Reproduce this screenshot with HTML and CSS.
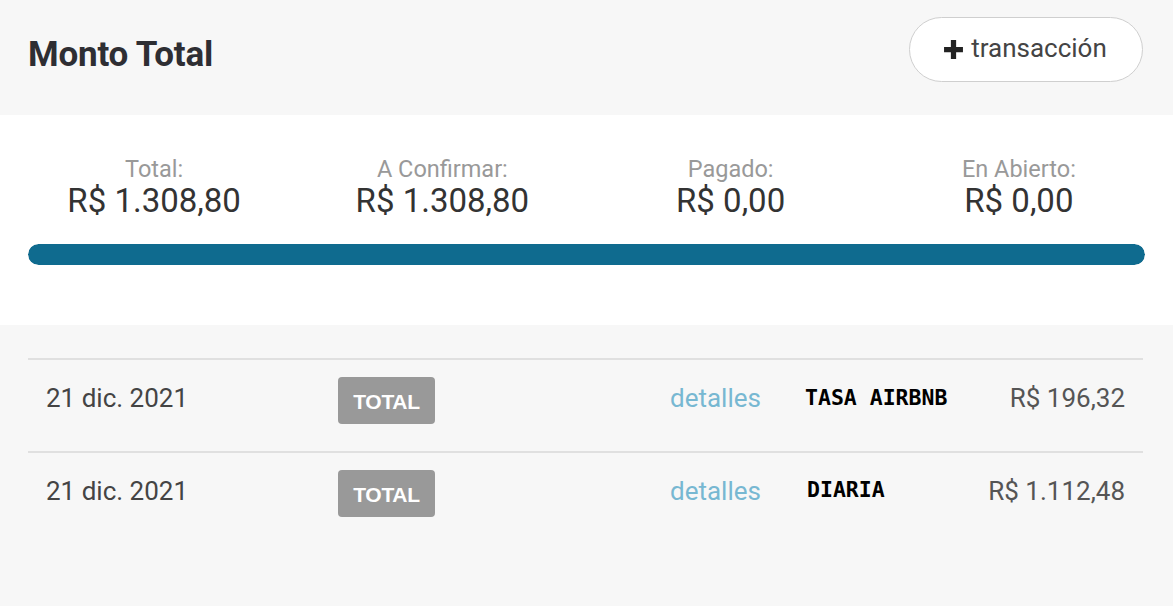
FILE: index.html
```html
<!DOCTYPE html>
<html lang="es">
<head>
<meta charset="utf-8">
<title>Monto Total</title>
<link rel="stylesheet" href="styles.css">
</head>
<body>
  <header class="header">
    <h1 class="title">Monto Total</h1>
    <button class="add-btn" type="button">
      <svg class="plus" viewBox="0 0 20 20" width="20" height="20" aria-hidden="true">
        <path d="M7.5 1h5v6.5h6.5v5h-6.5v6.5h-5v-6.5h-6.5v-5h6.5z" fill="#222"/>
      </svg>
      <span>transacción</span>
    </button>
  </header>

  <section class="summary">
    <div class="stats">
      <div class="stat"><div class="stat-label">Total:</div><div class="stat-value">R$ 1.308,80</div></div>
      <div class="stat"><div class="stat-label">A Confirmar:</div><div class="stat-value">R$ 1.308,80</div></div>
      <div class="stat"><div class="stat-label">Pagado:</div><div class="stat-value">R$ 0,00</div></div>
      <div class="stat"><div class="stat-label">En Abierto:</div><div class="stat-value">R$ 0,00</div></div>
    </div>
    <div class="progress"><div class="progress-fill" style="width:100%"></div></div>
  </section>

  <section class="list">
    <div class="row">
      <div class="date">21 dic. 2021</div>
      <div><span class="badge">TOTAL</span></div>
      <a class="details" href="#">detalles</a>
      <div class="desc">TASA AIRBNB</div>
      <div class="amount">R$ 196,32</div>
    </div>
    <div class="row">
      <div class="date">21 dic. 2021</div>
      <div><span class="badge">TOTAL</span></div>
      <a class="details" href="#">detalles</a>
      <div class="desc desc-alt">DIARIA</div>
      <div class="amount">R$ 1.112,48</div>
    </div>
  </section>
</body>
</html>
```

FILE: styles.css
```css
* { box-sizing: border-box; }

html, body {
  margin: 0;
  padding: 0;
}

body {
  background: #f7f7f7;
  font-family: Roboto, "Liberation Sans", Arial, sans-serif;
  color: #333;
  width: 1173px;
  height: 606px;
  overflow: hidden;
}

.header {
  height: 115px;
  display: flex;
  align-items: center;
  justify-content: space-between;
  padding: 0 30px 0 28px;
}

.title {
  margin: 0 0 6px 0;
  font-size: 35px;
  font-weight: 700;
  color: #2e2e33;
  letter-spacing: -0.2px;
}

.add-btn {
  width: 234px;
  height: 65px;
  margin-top: -16px;
  border: 1px solid #cfcfcf;
  border-radius: 33px;
  background: #fff;
  display: flex;
  align-items: center;
  justify-content: center;
  gap: 7px;
  font-family: Roboto, "Liberation Sans", sans-serif;
  font-size: 26px;
  color: #444;
  padding: 0 0 3px 0;
  cursor: pointer;
}

.plus { width: 21px; height: 21px; margin-top: 2px; margin-left: -2px; }

.summary {
  background: #fff;
  height: 210px;
  padding: 40px 28px 0 28px;
}

.stats {
  display: grid;
  grid-template-columns: repeat(4, 1fr);
  margin: 0 -18px;
  text-align: center;
}

.stat-label {
  font-size: 23.5px;
  color: #999;
  line-height: 28px;
}

.stat-value {
  font-size: 33px;
  color: #333;
  line-height: 36px;
}

.progress {
  margin-top: 25px;
  height: 21px;
  border-radius: 11px;
  background: #e6e6e6;
  overflow: hidden;
}

.progress-fill {
  height: 100%;
  background: #0f6b8f;
  border-radius: 11px;
}

.list {
  padding: 33px 30px 0 28px;
}

.row {
  display: grid;
  grid-template-columns: 292px 332px 135px 1fr auto;
  align-items: center;
  height: 93px;
  border-top: 2px solid #e0e0e0;
  padding: 0 18px 10px 18px;
}

.date {
  font-size: 26px;
  color: #444;
  margin-top: -6px;
}

.badge {
  display: inline-flex;
  align-items: center;
  justify-content: center;
  width: 97px;
  height: 47px;
  background: #999;
  border-radius: 4px;
  color: #fff;
  font-family: "Liberation Sans", Arial, sans-serif;
  font-weight: 700;
  font-size: 21px;
  padding-top: 2px;
  letter-spacing: -0.3px;
}

.details {
  font-size: 26px;
  color: #77b8d2;
  text-decoration: none;
  margin-top: -6px;
}

.desc {
  font-family: "DejaVu Sans Mono", "Liberation Mono", monospace;
  font-weight: 700;
  font-size: 21.5px;
  color: #000;
  margin-top: -6px;
}

.desc-alt { padding-left: 2px; margin-top: -9px; }

.amount {
  font-size: 26px;
  color: #555;
  text-align: right;
  margin-top: -6px;
}
```
